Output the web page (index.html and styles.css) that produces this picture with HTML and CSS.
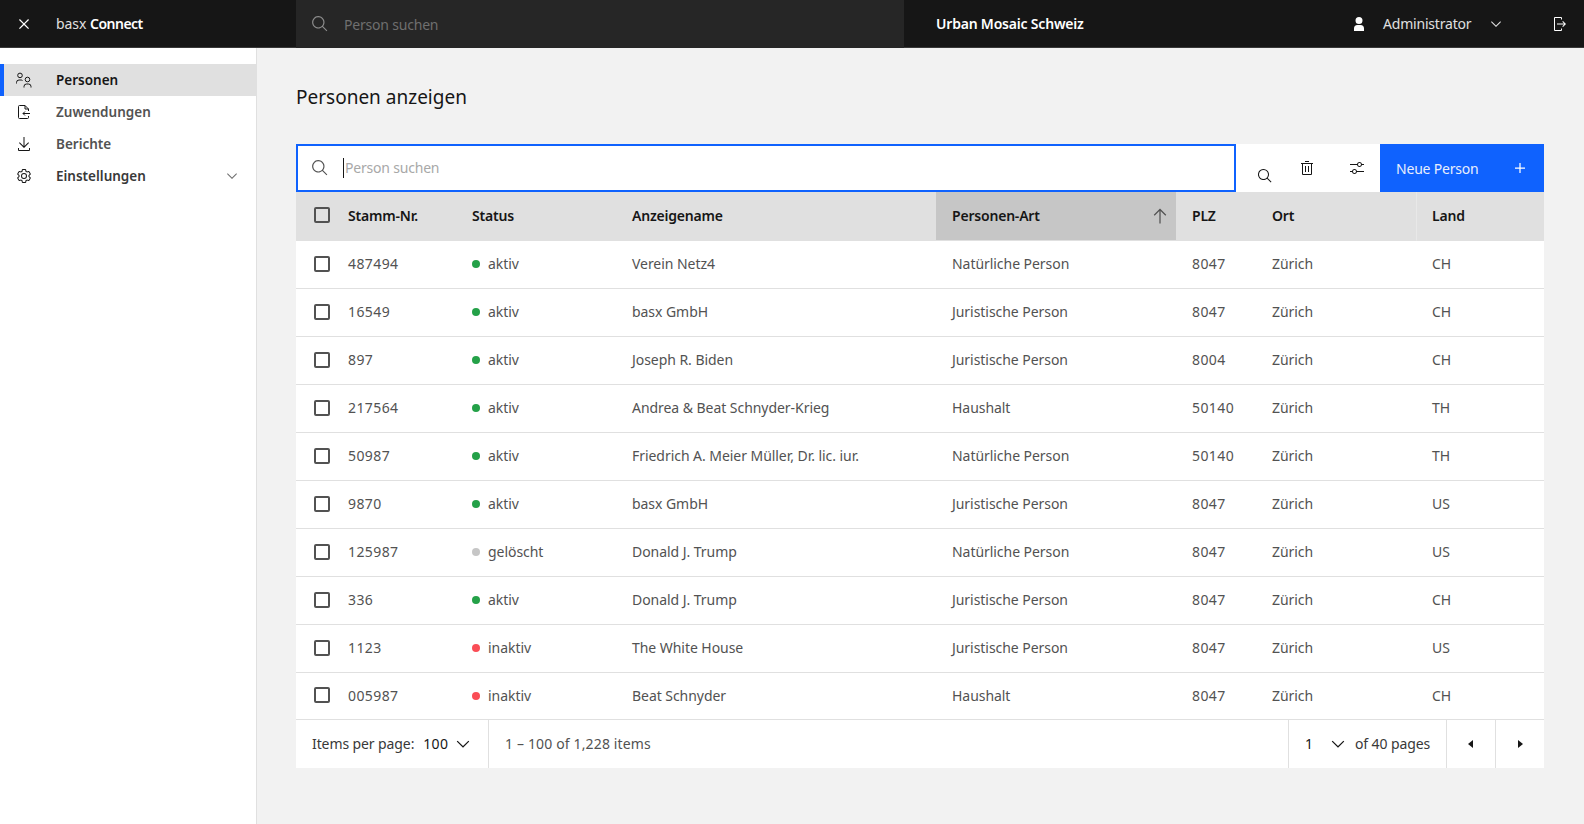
FILE: index.html
```html
<!DOCTYPE html>
<html lang="de">
<head>
<meta charset="utf-8">
<title>Personen anzeigen</title>
<link rel="stylesheet" href="styles.css">
</head>
<body>
<header class="topbar">
  <div class="brand">
    <span class="close-slot"><svg class="i20" viewBox="0 0 32 32"><path d="M24 9.4L22.6 8 16 14.6 9.4 8 8 9.4 14.6 16 8 22.6 9.4 24 16 17.4 22.6 24 24 22.6 17.4 16 24 9.4z"/></svg></span>
    <span class="brand-name">basx <b>Connect</b></span>
  </div>
  <div class="top-search">
    <svg class="i18" viewBox="0 0 32 32"><path d="M29,27.5859l-7.5521-7.5521a11.0177,11.0177,0,1,0-1.4141,1.4141L27.5859,29ZM4,13a9,9,0,1,1,9,9A9.01,9.01,0,0,1,4,13Z"/></svg>
    <span>Person suchen</span>
  </div>
  <div class="org">Urban Mosaic Schweiz</div>
  <div class="user">
    <svg class="i16 person" viewBox="0 0 32 32"><path d="M6 30h20v-5a7.008 7.008 0 00-7-7H13a7.008 7.008 0 00-7 7zM9 9a7 7 0 107-7A7 7 0 009 9z"/></svg>
    <span class="user-name">Administrator</span>
    <svg class="i16 user-chev" viewBox="0 0 32 32"><path d="M16 22L6 12l1.4-1.4 8.6 8.6 8.6-8.6L26 12z"/></svg>
    <svg class="i16 logout" viewBox="0 0 32 32"><path d="M6,30H18a2.0023,2.0023,0,0,0,2-2V25H18v3H6V4H18V7h2V4a2.0023,2.0023,0,0,0-2-2H6A2.0023,2.0023,0,0,0,4,4V28A2.0023,2.0023,0,0,0,6,30Z"/><path d="M20.586 20.586L24.172 17 10 17 10 15 24.172 15 20.586 11.414 22 10 28 16 22 22 20.586 20.586z"/></svg>
  </div>
</header>
<div class="shell">
  <nav class="side">
    <a class="nav-item active">
      <svg class="i16 line" viewBox="0 0 16 16"><circle cx="4" cy="3.4" r="2.3"/><path d="M.5 11.5V10.5a2.5 2.5 0 0 1 2.5-2.500h2a2.500 2.500 0 0 1 1.500.500"/><circle cx="11.500" cy="7.500" r="2.300"/><path d="M8 15.500V14.500a2.500 2.500 0 0 1 2.500-2.500h2a2.500 2.500 0 0 1 2.500 2.500v1"/></svg>
      <span>Personen</span>
    </a>
    <a class="nav-item">
      <svg class="i16 line" viewBox="0 0 16 16"><path d="M12.500 7V5L9 1.500H3.500a1 1 0 0 0-1 1V13.500a1 1 0 0 0 1 1H11.500a1 1 0 0 0 1-1V12M9 1.500V5h3.500M14 9.500H7M9 7.500l-2 2 2 2"/></svg>
      <span>Zuwendungen</span>
    </a>
    <a class="nav-item">
      <svg class="i16" viewBox="0 0 32 32"><path d="M26 24v4H6v-4H4v4a2 2 0 002 2h20a2 2 0 002-2v-4zM26 14l-1.41-1.41L17 20.17V2H15V20.17L7.41 12.59 6 14 16 24 26 14z"/></svg>
      <span>Berichte</span>
    </a>
    <a class="nav-item group">
      <svg class="i16" viewBox="0 0 32 32"><path d="M27,16.76c0-.25,0-.5,0-.76s0-.51,0-.77l1.92-1.68A2,2,0,0,0,29.3,11L26.94,7a2,2,0,0,0-1.73-1,2,2,0,0,0-.64.1l-2.43.82a11.35,11.35,0,0,0-1.31-.75l-.51-2.52a2,2,0,0,0-2-1.61H13.64a2,2,0,0,0-2,1.61l-.51,2.52a11.48,11.48,0,0,0-1.32.75L7.43,6.06A2,2,0,0,0,6.79,6,2,2,0,0,0,5.06,7L2.7,11a2,2,0,0,0,.41,2.51L5,15.24c0,.25,0,.5,0,.76s0,.51,0,.77L3.11,18.45A2,2,0,0,0,2.7,21L5.06,25a2,2,0,0,0,1.73,1,2,2,0,0,0,.64-.1l2.43-.82a11.35,11.35,0,0,0,1.31.75l.51,2.52a2,2,0,0,0,2,1.61h4.72a2,2,0,0,0,2-1.61l.51-2.52a11.48,11.48,0,0,0,1.32-.75l2.42.82a2,2,0,0,0,.64.1,2,2,0,0,0,1.73-1L29.3,21a2,2,0,0,0-.41-2.51ZM25.21,24l-3.43-1.16a8.86,8.86,0,0,1-2.71,1.57L18.36,28H13.64l-.71-3.55a9.36,9.36,0,0,1-2.7-1.57L6.79,24,4.43,20l2.72-2.4a8.9,8.9,0,0,1,0-3.13L4.43,12,6.79,8l3.43,1.16a8.86,8.86,0,0,1,2.71-1.57L13.64,4h4.72l.71,3.55a9.36,9.36,0,0,1,2.7,1.57L25.21,8,27.57,12l-2.72,2.4a8.9,8.9,0,0,1,0,3.13L27.57,20Z"/><path d="M16,22a6,6,0,1,1,6-6A5.94,5.94,0,0,1,16,22Zm0-10a3.91,3.91,0,0,0-4,4,3.91,3.91,0,0,0,4,4,3.91,3.91,0,0,0,4-4A3.91,3.91,0,0,0,16,12Z"/></svg>
      <span>Einstellungen</span>
      <svg class="i16 nav-chev" viewBox="0 0 32 32"><path d="M16 22L6 12l1.4-1.4 8.6 8.6 8.6-8.6L26 12z"/></svg>
    </a>
  </nav>
  <main class="content">
    <h1 class="title">Personen anzeigen</h1>
    <div class="toolbar">
      <div class="search-box">
        <svg class="i18" viewBox="0 0 32 32"><path d="M29,27.5859l-7.5521-7.5521a11.0177,11.0177,0,1,0-1.4141,1.4141L27.5859,29ZM4,13a9,9,0,1,1,9,9A9.01,9.01,0,0,1,4,13Z"/></svg>
        <span class="placeholder">Person suchen</span>
      </div>
      <div class="tool tool-low"><svg class="i16" viewBox="0 0 32 32"><path d="M29,27.5859l-7.5521-7.5521a11.0177,11.0177,0,1,0-1.4141,1.4141L27.5859,29ZM4,13a9,9,0,1,1,9,9A9.01,9.01,0,0,1,4,13Z"/></svg></div>
      <div class="tool tool-trash"><svg class="i16" viewBox="0 0 32 32"><path d="M12 12H14V24H12zM18 12H20V24H18z"/><path d="M4 6V8H6V28a2 2 0 002 2H24a2 2 0 002-2V8h2V6zM8 28V8H24V28zM12 2H20V4H12z"/></svg></div>
      <div class="tool tool-adjust"><svg class="i16" viewBox="0 0 32 32"><path d="M30,8h-4.1c-0.5-2.3-2.5-4-4.9-4s-4.4,1.7-4.9,4H2v2h14.1c0.5,2.3,2.5,4,4.9,4s4.4-1.7,4.9-4H30V8z M21,12c-1.7,0-3-1.3-3-3s1.3-3,3-3s3,1.3,3,3S22.7,12,21,12z"/><path d="M2,24h4.1c0.5,2.3,2.5,4,4.9,4s4.4-1.7,4.9-4H30v-2H15.9c-0.5-2.3-2.5-4-4.9-4s-4.4,1.7-4.9,4H2V24z M11,20c1.7,0,3,1.3,3,3s-1.3,3-3,3s-3-1.3-3-3S9.3,20,11,20z"/></svg></div>
      <button class="primary"><span>Neue Person</span><svg class="i20" viewBox="0 0 32 32"><path d="M17 15V8h-2v7H8v2h7v7h2v-7h7v-2z"/></svg></button>
    </div>
    <table class="grid">
      <colgroup>
        <col class="c-check"><col class="c-nr"><col class="c-status"><col class="c-name"><col class="c-art"><col class="c-plz"><col class="c-ort"><col class="c-land">
      </colgroup>
      <thead>
        <tr>
          <th class="check"><span class="box"></span></th>
          <th>Stamm-Nr.</th>
          <th>Status</th>
          <th>Anzeigename</th>
          <th class="sorted"><div class="sort-wrap"><span>Personen-Art</span><svg class="i20" viewBox="0 0 32 32"><path d="M16 4L6 14l1.41 1.41L15 7.83V28h2V7.83l7.59 7.58L26 14z"/></svg></div></th>
          <th>PLZ</th>
          <th>Ort</th>
          <th class="land">Land</th>
        </tr>
      </thead>
      <tbody>
        <tr><td class="check"><span class="box"></span></td><td class="num">487494</td><td><i class="dot ok"></i>aktiv</td><td>Verein Netz4</td><td>Natürliche Person</td><td class="num">8047</td><td>Zürich</td><td>CH</td></tr>
        <tr><td class="check"><span class="box"></span></td><td class="num">16549</td><td><i class="dot ok"></i>aktiv</td><td>basx GmbH</td><td>Juristische Person</td><td class="num">8047</td><td>Zürich</td><td>CH</td></tr>
        <tr><td class="check"><span class="box"></span></td><td class="num">897</td><td><i class="dot ok"></i>aktiv</td><td>Joseph R. Biden</td><td>Juristische Person</td><td class="num">8004</td><td>Zürich</td><td>CH</td></tr>
        <tr><td class="check"><span class="box"></span></td><td class="num">217564</td><td><i class="dot ok"></i>aktiv</td><td>Andrea &amp; Beat Schnyder-Krieg</td><td>Haushalt</td><td class="num">50140</td><td>Zürich</td><td>TH</td></tr>
        <tr><td class="check"><span class="box"></span></td><td class="num">50987</td><td><i class="dot ok"></i>aktiv</td><td>Friedrich A. Meier Müller, Dr. lic. iur.</td><td>Natürliche Person</td><td class="num">50140</td><td>Zürich</td><td>TH</td></tr>
        <tr><td class="check"><span class="box"></span></td><td class="num">9870</td><td><i class="dot ok"></i>aktiv</td><td>basx GmbH</td><td>Juristische Person</td><td class="num">8047</td><td>Zürich</td><td>US</td></tr>
        <tr><td class="check"><span class="box"></span></td><td class="num">125987</td><td><i class="dot off"></i>gelöscht</td><td>Donald J. Trump</td><td>Natürliche Person</td><td class="num">8047</td><td>Zürich</td><td>US</td></tr>
        <tr><td class="check"><span class="box"></span></td><td class="num">336</td><td><i class="dot ok"></i>aktiv</td><td>Donald J. Trump</td><td>Juristische Person</td><td class="num">8047</td><td>Zürich</td><td>CH</td></tr>
        <tr><td class="check"><span class="box"></span></td><td class="num">1123</td><td><i class="dot bad"></i>inaktiv</td><td>The White House</td><td>Juristische Person</td><td class="num">8047</td><td>Zürich</td><td>US</td></tr>
        <tr><td class="check"><span class="box"></span></td><td class="num">005987</td><td><i class="dot bad"></i>inaktiv</td><td>Beat Schnyder</td><td>Haushalt</td><td class="num">8047</td><td>Zürich</td><td>CH</td></tr>
      </tbody>
    </table>
    <div class="pager">
      <div class="per-page"><span>Items per page:</span><span class="val">100</span><svg class="i20" viewBox="0 0 32 32"><path d="M16 22L6 12l1.4-1.4 8.6 8.6 8.6-8.6L26 12z"/></svg></div>
      <div class="range">1 – 100 of 1,228 items</div>
      <div class="pages"><span class="val">1</span><svg class="i20" viewBox="0 0 32 32"><path d="M16 22L6 12l1.4-1.4 8.6 8.6 8.6-8.6L26 12z"/></svg><span>of 40 pages</span></div>
      <div class="step"><svg class="i16" viewBox="0 0 32 32"><path d="M20 24L10 16 20 8z"/></svg></div>
      <div class="step"><svg class="i16" viewBox="0 0 32 32"><path d="M12 8L22 16 12 24z"/></svg></div>
    </div>
  </main>
</div>
</body>
</html>
```

FILE: styles.css
```css
* { box-sizing: border-box; }
html, body { margin: 0; height: 100%; }
body {
  font-family: "Noto Sans", "Open Sans", sans-serif;
  font-size: 14px;
  letter-spacing: -0.05px;
  color: #525252;
  background: #f2f2f2;
  display: flex;
  flex-direction: column;
  overflow: hidden;
}
svg { fill: currentColor; flex: none; display: block; }
.i16 { width: 16px; height: 16px; }
.i18 { width: 18px; height: 18px; }
.i20 { width: 20px; height: 20px; }
.line { fill: none; stroke: currentColor; stroke-width: 1; }

.topbar {
  height: 48px;
  flex: none;
  background: #161616;
  border-bottom: 1px solid #393939;
  color: #f4f4f4;
  display: flex;
  align-items: stretch;
}
.brand { width: 296px; display: flex; align-items: center; }
.close-slot { width: 56px; padding-left: 14px; color: #fff; }
.brand-name { color: #e0e0e0; }
.brand-name b { color: #fff; font-weight: 600; letter-spacing: -0.5px; }
.top-search {
  width: 608px;
  background: #262626;
  display: flex;
  align-items: center;
  gap: 15px;
  padding-left: 15px;
  color: #6f6f6f;
  letter-spacing: -0.2px;
  margin-bottom: -1px;
}
.top-search svg { color: #8d8d8d; }
.org { width: 400px; padding-left: 32px; display: flex; align-items: center; font-weight: 600; color: #fff; letter-spacing: -0.2px; }
.user { flex: 1; display: flex; align-items: center; color: #e0e0e0; }
.person { margin-left: 47px; color: #fff; }
.user-name { margin-left: 16px; width: 88px; letter-spacing: -0.2px; }
.user-chev { margin-left: 17px; }
.logout { margin-left: 48px; color: #fff; }

.shell { flex: 1; display: flex; min-height: 0; }
.side {
  width: 257px;
  flex: none;
  background: #fff;
  border-right: 1px solid #e0e0e0;
  padding-top: 16px;
}
.nav-item {
  height: 32px;
  display: flex;
  align-items: center;
  gap: 24px;
  padding-left: 16px;
  padding-right: 16px;
  font-size: 13.5px;
  letter-spacing: 0;
  font-weight: 600;
  color: #525252;
}
.nav-item svg { color: #161616; }
.nav-item.active {
  background: #e0e0e0;
  color: #161616;
  box-shadow: inset 4px 0 0 #0f62fe;
}
.nav-item.group { color: #393939; }
.nav-item .nav-chev { margin-left: auto; color: #6f6f6f; }

.content { flex: 1; padding: 0 40px 0 39px; min-width: 0; }
.title {
  margin: 0;
  height: 96px;
  padding-top: 36px;
  font-size: 19px;
  line-height: 26px;
  letter-spacing: 0;
  font-weight: 400;
  color: #161616;
}
.toolbar { display: flex; height: 48px; background: #fff; }
.search-box {
  width: 940px;
  border: 2px solid #0f62fe;
  display: flex;
  align-items: center;
  padding-left: 13px;
  color: #525252;
}
.placeholder {
  margin-left: 14px;
  height: 20px;
  line-height: 20px;
  border-left: 1px solid #161616;
  padding-left: 1px;
  letter-spacing: -0.2px;
  color: #a8a8a8;
}
.tool {
  width: 48px;
  display: flex;
  align-items: center;
  justify-content: center;
  color: #161616;
}
.tool-low { padding-top: 16px; padding-left: 9px; }
.tool-trash { padding-right: 2px; }
.tool-adjust { padding-left: 2px; }
.primary {
  flex: 1;
  border: 0;
  background: #0f62fe;
  color: #fff;
  font: inherit;
  letter-spacing: -0.2px;
  display: flex;
  align-items: center;
  justify-content: space-between;
  padding: 0 14px 0 16px;
}
.primary span { color: #e8eefc; }

.grid { width: 100%; table-layout: fixed; border-collapse: separate; border-spacing: 0; background: #fff; }
.c-check { width: 36px; }
.c-nr { width: 124px; }
.c-status { width: 160px; }
.c-name { width: 320px; }
.c-art { width: 240px; }
.c-plz { width: 80px; }
.c-ort { width: 160px; }
.c-land { width: 128px; }
.grid th, .grid td {
  height: 48px;
  padding: 0 0 2px 16px;
  text-align: left;
  white-space: nowrap;
}
.grid th {
  height: 49px;
  background: #e0e0e0;
  color: #161616;
  font-weight: 600;
  letter-spacing: -0.2px;
  border-bottom: 1px solid #e0e0e0;
}
.grid td { border-bottom: 1px solid #e0e0e0; }
.grid td.num { letter-spacing: 0.4px; }
.grid tbody tr:last-child td { height: 47px; }
.grid .check { padding-left: 18px; }
.grid .sorted { background: #c6c6c6; padding-right: 6px; padding-bottom: 0; }
.sort-wrap { display: flex; align-items: center; justify-content: space-between; }
.sort-wrap span { margin-bottom: 2px; }
.sort-wrap svg { color: #525252; }
.grid .land { border-left: 1px solid #e8e8e8; padding-left: 15px; }
.box {
  display: block;
  width: 16px;
  height: 16px;
  border: 2px solid #525252;
  border-radius: 2px;
  background: #fff;
}
th .box { background: transparent; }
.dot {
  display: inline-block;
  width: 8px;
  height: 8px;
  border-radius: 50%;
  margin-right: 8px;
  vertical-align: 1px;
}
.ok { background: #24a148; }
.off { background: #c6c6c6; }
.bad { background: #fa4d56; }

.pager { display: flex; height: 48px; background: #fff; color: #525252; }
.pager > div { display: flex; align-items: center; }
.per-page, .range, .pages { padding-bottom: 2px; }
.pager svg { margin-top: 2px; }
.step svg { margin-top: 0; }
.per-page { width: 193px; padding-left: 16px; color: #393939; border-right: 1px solid #e0e0e0; letter-spacing: -0.1px; }
.per-page .val { margin-left: 9px; color: #161616; letter-spacing: 0.3px; }
.per-page svg { margin-left: 5px; color: #161616; }
.range { flex: 1; padding-left: 16px; letter-spacing: 0.15px; }
.pages { width: 158px; padding-left: 16px; border-left: 1px solid #e0e0e0; color: #393939; letter-spacing: -0.1px; }
.pages .val { color: #161616; }
.pages svg { margin-left: 15px; margin-right: 7px; color: #161616; }
.step { width: 49px; justify-content: center; border-left: 1px solid #e0e0e0; color: #161616; }
```
